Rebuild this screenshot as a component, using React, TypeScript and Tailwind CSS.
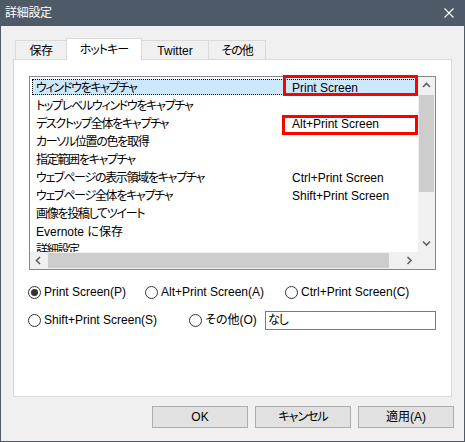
import React from 'react'

const rows = [
  { label: 'ウィンドウをキャプチャ', key: 'Print Screen' },
  { label: 'トップレベルウィンドウをキャプチャ', key: '' },
  { label: 'デスクトップ全体をキャプチャ', key: 'Alt+Print Screen' },
  { label: 'カーソル位置の色を取得', key: '' },
  { label: '指定範囲をキャプチャ', key: '' },
  { label: 'ウェブページの表示領域をキャプチャ', key: 'Ctrl+Print Screen' },
  { label: 'ウェブページ全体をキャプチャ', key: 'Shift+Print Screen' },
  { label: '画像を投稿してツイート', key: '' },
  { label: 'Evernote に保存', key: '', latin: true },
  { label: '詳細設定', key: '' },
]

function Chevron({ dir }: { dir: 'up' | 'down' | 'left' | 'right' }) {
  const d = {
    up: 'M1 5 L4.5 1.5 L8 5',
    down: 'M1 1.5 L4.5 5 L8 1.5',
    left: 'M5 1 L1.5 4.5 L5 8',
    right: 'M1.5 1 L5 4.5 L1.5 8',
  }[dir]
  const vert = dir === 'up' || dir === 'down'
  return (
    <svg width={vert ? 9 : 7} height={vert ? 7 : 9} viewBox={vert ? '0 0 9 7' : '0 0 7 9'}>
      <path d={d} fill="none" stroke="#606060" strokeWidth="1.6" />
    </svg>
  )
}

function Radio({ checked, label, className }: { checked?: boolean; label: string; className?: string }) {
  return (
    <div className={`flex items-center ${className ?? ''}`}>
      <span className="w-[13px] h-[13px] rounded-full border border-[#333] bg-white flex items-center justify-center mr-[3px] shrink-0">
        {checked && <span className="w-[7px] h-[7px] rounded-full bg-[#333]" />}
      </span>
      <span>{label}</span>
    </div>
  )
}

export default function App() {
  return (
    <div className="w-[465px] h-[442px] flex flex-col bg-[#f0f0f0] border-x border-b border-[#4f5a69] text-[12px] leading-none text-black font-['Liberation_Sans','Noto_Sans_CJK_JP',sans-serif] [font-feature-settings:'palt']">
      {/* ---- Title bar ---- */}
      <div className="h-[26px] shrink-0 bg-[#4f5a69] flex items-center justify-between pl-[4px] pr-[10px] text-white">
        <span className="tracking-[-0.3px]">詳細設定</span>
        <svg width="10" height="10" viewBox="0 0 10 10">
          <path d="M0.5 0.5 L9.5 9.5 M9.5 0.5 L0.5 9.5" stroke="#fff" strokeWidth="1.1" />
        </svg>
      </div>

      {/* ---- Tabs ---- */}
      <div className="pt-[12px]">
        <div className="ml-[14px] flex items-end h-[22px] relative z-10 -mb-px">
          <div className="w-[51px] h-[20px] border-l border-t border-[#d9d9d9] flex items-center justify-center tracking-[-0.5px]">保存</div>
          <div className="w-[76px] h-[22px] border-x border-t border-[#d9d9d9] bg-white flex items-center justify-center tracking-[-1px]">ホットキー</div>
          <div className="w-[67px] h-[20px] border-r border-t border-[#d9d9d9] flex items-center justify-center">Twitter</div>
          <div className="w-[57px] h-[20px] border-r border-t border-[#d9d9d9] flex items-center justify-center tracking-[-1px]">その他</div>
        </div>

        {/* ---- Panel ---- */}
        <div className="ml-[12px] w-[439px] h-[338px] bg-white border border-[#d9d9d9] px-[15px] pt-[16px]">
          <div className="relative w-[407px] h-[194px] border border-[#828790] flex flex-col">
            <div className="flex flex-1 min-h-0">
              <div className="flex-1 overflow-hidden pt-px">
                {rows.map((r, i) => (
                  <div key={i} className="h-[18px] py-px px-[2px]">
                    <div
                      className={`h-full flex items-center pl-[3px] pt-[2px] border ${
                        i === 0 ? 'bg-[#cce8ff] border-dotted border-black' : 'border-transparent'
                      }`}
                    >
                      <span className={`w-[256px] shrink-0 whitespace-nowrap ${r.latin ? '' : 'tracking-[-1.3px]'}`}>
                        {r.label}
                      </span>
                      <span className="whitespace-nowrap">{r.key}</span>
                    </div>
                  </div>
                ))}
              </div>
              <div className="w-[17px] bg-[#f0f0f0] flex flex-col items-center">
                <div className="h-[17px] w-full flex items-center justify-center">
                  <Chevron dir="up" />
                </div>
                <div className="mt-px w-[15px] h-[97px] bg-[#cdcdcd]" />
                <div className="flex-1" />
                <div className="h-[17px] w-full flex items-center justify-center">
                  <Chevron dir="down" />
                </div>
              </div>
            </div>
            <div className="h-[17px] flex">
              <div className="flex-1 bg-[#f0f0f0] flex items-center">
                <div className="w-[17px] h-full flex items-center justify-center">
                  <Chevron dir="left" />
                </div>
                <div className="ml-px w-[341px] h-[15px] bg-[#cdcdcd]" />
                <div className="flex-1" />
                <div className="w-[17px] h-full flex items-center justify-center">
                  <Chevron dir="right" />
                </div>
              </div>
              <div className="w-[17px] bg-[#f0f0f0]" />
            </div>

            {/* highlight annotations */}
            <div className="absolute left-[253px] top-[-2px] w-[135px] h-[21px] border-[3px] border-[#ff0000]" />
            <div className="absolute left-[252px] top-[38px] w-[136px] h-[20px] border-[3px] border-[#ff0000]" />
          </div>

          {/* ---- Radios ---- */}
          <div className="mt-[12px] -ml-px h-[20px] flex items-center">
            <Radio checked label="Print Screen(P)" className="w-[117px]" />
            <Radio label="Alt+Print Screen(A)" className="w-[140px]" />
            <Radio label="Ctrl+Print Screen(C)" />
          </div>
          <div className="mt-[8px] -ml-px h-[20px] flex items-center">
            <Radio label="Shift+Print Screen(S)" className="w-[161px]" />
            <Radio label="その他(O)" className="w-[76px]" />
            <div className="w-[171px] h-[19px] border border-[#7a7a7a] bg-white flex items-center pl-[2px] tracking-[-1px]">なし</div>
          </div>
        </div>
      </div>

      {/* ---- Buttons ---- */}
      <div className="mt-[9px] flex justify-end gap-[7px] pr-[10px]">
        <button className="w-[96px] h-[22px] bg-[#e1e1e1] border border-[#adadad]">OK</button>
        <button className="w-[96px] h-[22px] bg-[#e1e1e1] border border-[#adadad] tracking-[-1px]">キャンセル</button>
        <button className="w-[96px] h-[22px] bg-[#e1e1e1] border border-[#adadad]">適用(A)</button>
      </div>
    </div>
  )
}
